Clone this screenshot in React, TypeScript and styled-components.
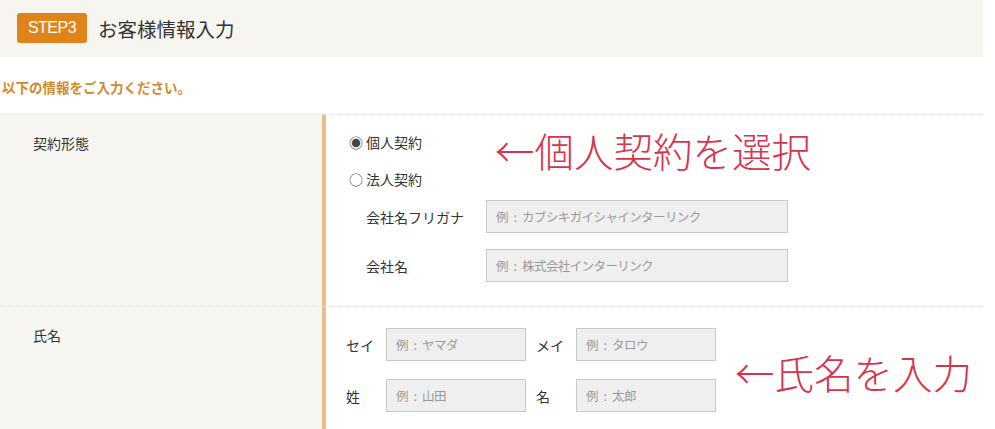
import React from "react";
import styled, { createGlobalStyle } from "styled-components";

const Global = createGlobalStyle`
  html, body { margin: 0; padding: 0; background: #fff; }
  body { font-family: "Noto Sans CJK JP", "Noto Sans", sans-serif; color: #333; }
  * { box-sizing: border-box; }
`;

const Page = styled.div`
  width: 983px;
`;

const Header = styled.div`
  height: 57px;
  background: #f7f5f0;
  display: flex;
  align-items: center;
  padding-left: 17px;
`;

const Badge = styled.span`
  display: inline-flex;
  align-items: center;
  justify-content: center;
  width: 70px;
  height: 30px;
  margin-top: -2px;
  border-radius: 3px;
  background: #df8418;
  color: #fff;
  font-family: "Liberation Sans", "Noto Sans", sans-serif;
  font-size: 16px;
  letter-spacing: -0.5px;
`;

const Title = styled.h1`
  margin: 0 0 0 11px;
  font-size: 19.5px;
  font-weight: 400;
  color: #333;
  line-height: 1;
`;

const Lead = styled.p`
  margin: 0;
  height: 57px;
  display: flex;
  align-items: center;
  padding: 3px 0 0 2px;
  font-size: 13.5px;
  font-weight: 700;
  color: #d18a30;
`;

const Table = styled.div`
  border-top: 1px dotted #dcdcdc;
`;

const Row = styled.div<{ $last?: boolean }>`
  display: grid;
  grid-template-columns: 326px 1fr;
  border-bottom: ${(p) => (p.$last ? "none" : "1px dotted #dcdcdc")};
`;

const LabelCell = styled.div`
  background: #f8f6f2;
  border-right: 4px solid #e8bd88;
  padding: 19px 0 0 33px;
  font-size: 14px;
  line-height: 18px;
`;

const FieldCell = styled.div<{ $pad: string }>`
  position: relative;
  padding: ${(p) => p.$pad};
`;

const RadioLine = styled.label`
  display: flex;
  align-items: center;
  height: 37px;
  font-size: 14px;
  gap: 4px;
`;

const RadioMark = styled.span`
  font-size: 14px;
  width: 12px;
  display: inline-flex;
  justify-content: center;
  line-height: 1;
  color: #444;
`;

const SubField = styled.div`
  display: grid;
  grid-template-columns: 120px 302px;
  align-items: center;
  margin-left: 16px;
  margin-top: 16px;
  &:first-of-type {
    margin-top: 0;
  }
`;

const SubLabel = styled.span`
  font-size: 14px;
`;

const Input = styled.div<{ $w: number }>`
  width: ${(p) => p.$w}px;
  height: 33px;
  background: #efefef;
  border: 1px solid #c9c9c9;
  display: flex;
  align-items: center;
  padding-left: 9px;
  font-size: 12.5px;
  color: #9a9a9a;
  white-space: pre;
  letter-spacing: -0.6px;
`;

const SubFields = styled.div`
  margin-top: 3px;
`;

const NameGrid = styled.div`
  display: grid;
  grid-template-columns: 40px 140px 50px 140px;
  row-gap: 18px;
  align-items: center;
`;

const NameLabel = styled.span`
  font-size: 14px;
  &:nth-child(4n + 3) {
    padding-left: 10px;
  }
`;

const Annotation = styled.div<{ $left: number; $top: number }>`
  position: absolute;
  left: ${(p) => p.$left}px;
  top: ${(p) => p.$top}px;
  font-size: 39.5px;
  line-height: 1;
  color: #d6344c;
  white-space: nowrap;
  font-weight: 300;
`;

const ph = (s: string) => `例\u2002:\u2002${s}`;

export default function App() {
  return (
    <>
      <Global />
      <Page>
        <Header>
          <Badge>STEP3</Badge>
          <Title>お客様情報入力</Title>
        </Header>
        <Lead>以下の情報をご入力ください。</Lead>
        <Table>
          <Row>
            <LabelCell>契約形態</LabelCell>
            <FieldCell $pad="8px 0 24px 24px">
              <RadioLine>
                <RadioMark>◉</RadioMark>個人契約
              </RadioLine>
              <RadioLine>
                <RadioMark>○</RadioMark>法人契約
              </RadioLine>
              <SubFields>
                <SubField>
                  <SubLabel>会社名フリガナ</SubLabel>
                  <Input $w={302}>{ph("カブシキガイシャインターリンク")}</Input>
                </SubField>
                <SubField>
                  <SubLabel>会社名</SubLabel>
                  <Input $w={302}>{ph("株式会社インターリンク")}</Input>
                </SubField>
              </SubFields>
              <Annotation $left={169} $top={15}>
                ←個人契約を選択
              </Annotation>
            </FieldCell>
          </Row>
          <Row $last>
            <LabelCell>氏名</LabelCell>
            <FieldCell $pad="21px 0 30px 20px">
              <NameGrid>
                <NameLabel>セイ</NameLabel>
                <Input $w={140}>{ph("ヤマダ")}</Input>
                <NameLabel>メイ</NameLabel>
                <Input $w={140}>{ph("タロウ")}</Input>
                <NameLabel>姓</NameLabel>
                <Input $w={140}>{ph("山田")}</Input>
                <NameLabel>名</NameLabel>
                <Input $w={140}>{ph("太郎")}</Input>
              </NameGrid>
              <Annotation $left={409} $top={45}>
                ←氏名を入力
              </Annotation>
            </FieldCell>
          </Row>
        </Table>
      </Page>
    </>
  );
}
